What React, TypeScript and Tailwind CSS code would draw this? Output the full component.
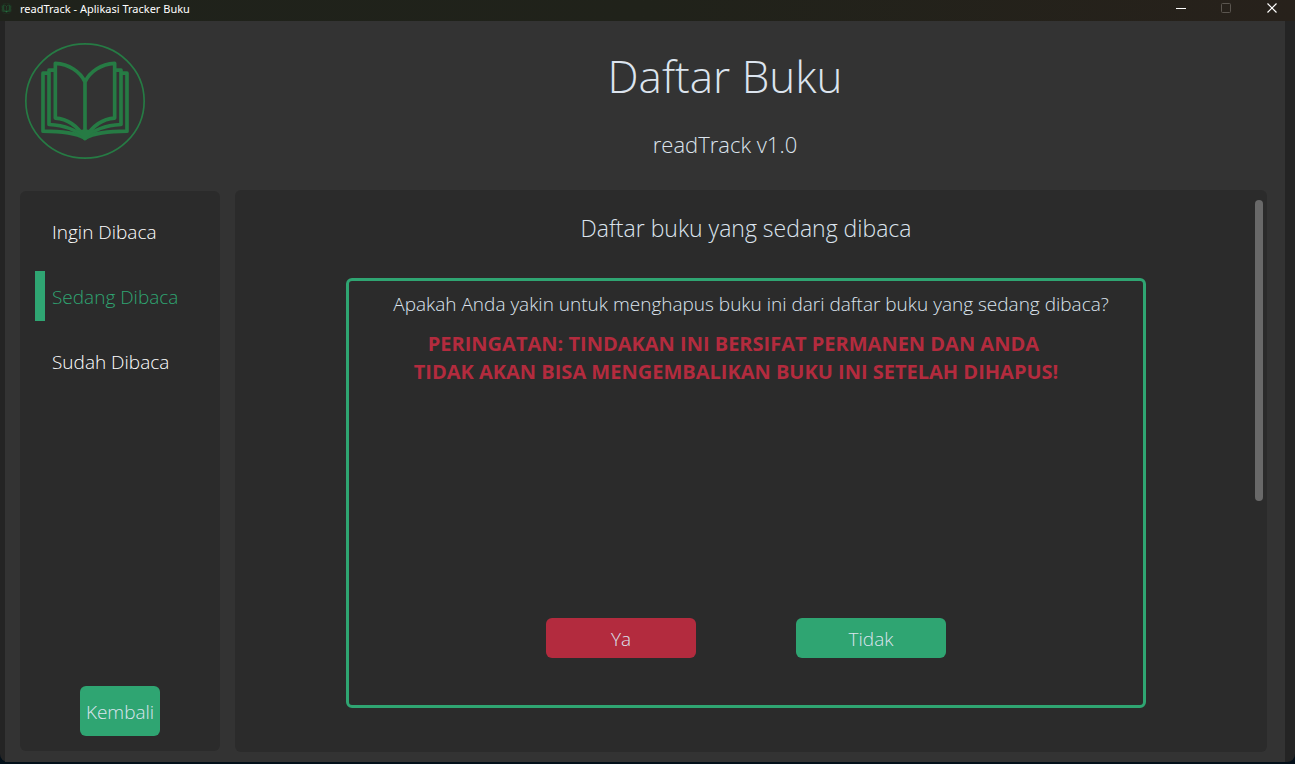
import { useState } from "react";

const shelves = ["Ingin Dibaca", "Sedang Dibaca", "Sudah Dibaca"];

function BookLogo({ className, label }: { className: string; label?: string }) {
  return (
    <svg viewBox="0 0 360 346" preserveAspectRatio="none" className={className} fill="none" stroke="#267b44" role="img" aria-label={label}>
      <ellipse cx="180" cy="173" rx="177.500" ry="170.500" strokeWidth="5" />
      <g strokeWidth="11" strokeLinejoin="round">
        <path d="M180 116C165 85 132 63 91 61V224C128 226 158 248 180 284V116C195 85 228 63 269 61V224C232 226 202 248 180 284" />
        <path d="M91 81H72V243C112 245 150 254 180 284C210 254 248 245 288 243V81H269" />
        <path d="M72 90H54V263C102 263 148 266 180 284C212 266 258 263 306 263V90H288" />
      </g>
      <path d="M150 262L180 258L210 262L180 291Z" fill="#267b44" />
    </svg>
  );
}

function TitleBar() {
  return (
    <header className="flex h-[21px] shrink-0 items-center justify-between bg-linear-to-r from-[#1f221b] via-[#20221a] to-[#27211b]">
      <div className="flex items-center gap-2 pb-1">
        <BookLogo className="ml-px h-[11px] w-[11px]" />
        <span className="font-['Noto_Sans',sans-serif] text-[11px] leading-4 font-normal text-white">readTrack - Aplikasi Tracker Buku</span>
      </div>
      <div className="flex pb-1">
        <button aria-label="Minimize" className="flex h-4 w-[45px] items-center justify-center">
          <svg className="h-[11px] w-[11px]" viewBox="0 0 11 11" stroke="#fff" shapeRendering="crispEdges"><path d="M0 5.500H10" /></svg>
        </button>
        <button aria-label="Maximize" disabled className="flex h-4 w-[45px] items-center justify-center">
          <svg className="h-[11px] w-[11px]" viewBox="0 0 11 11" stroke="#5a554f" fill="none"><rect x=".5" y=".5" width="9" height="9" rx="1" /></svg>
        </button>
        <button aria-label="Close" className="flex h-4 w-[46px] items-center justify-center">
          <svg className="h-[11px] w-[11px]" viewBox="0 0 11 11" stroke="#fff" strokeWidth="1.200"><path d="M.5 .5L9.500 9.500M9.500 .5L.5 9.500" /></svg>
        </button>
      </div>
    </header>
  );
}

export default function App() {
  const [active, setActive] = useState("Sedang Dibaca");

  return (
    <div className="flex h-screen flex-col bg-[#03101a] pb-0.5 font-['Open_Sans','Noto_Sans',sans-serif] font-light">
      <TitleBar />
      <div className="flex min-h-0 grow rounded-b-lg bg-[#242424] pr-2.5 pl-[5px]">
        <div className="flex min-w-0 grow flex-col bg-[#333333]">
          <div className="flex h-[169px] shrink-0">
            <div className="w-40 shrink-0 pt-[22px] pl-5">
              <BookLogo className="h-[116px] w-[120px]" label="readTrack" />
            </div>
            <div className="flex grow flex-col items-center pt-5 text-[#dce4ee]">
              <h1 className="text-[44px] leading-[70px]">Daftar Buku</h1>
              <p className="pt-[17px] text-[22px] leading-8">readTrack v1.0</p>
            </div>
          </div>

          <div className="flex min-h-0 grow gap-[15px] pr-[18px] pb-2.5 pl-[15px]">
            <nav className="my-px flex w-[200px] shrink-0 flex-col rounded-md bg-[#2b2b2b] pt-[15px] pb-[15px] pl-[15px]">
              <div className="flex flex-col gap-[15px]">
                {shelves.map((shelf) => (
                  <button
                    key={shelf}
                    onClick={() => setActive(shelf)}
                    className={
                      shelf === active
                        ? "flex h-[50px] items-center border-l-10 border-[#2fa572] pt-0.5 pl-[7px] text-[19px] text-[#2fa572]"
                        : "flex h-[50px] items-center border-l-10 border-transparent pt-0.5 pl-[7px] text-[19px] text-white"
                    }
                  >
                    {shelf}
                  </button>
                ))}
              </div>
              <button className="mt-auto mr-[15px] h-[50px] w-20 self-center rounded-md bg-[#2fa572] pt-0.5 text-[19px] text-[#dce4ee]">Kembali</button>
            </nav>

            <main className="flex min-w-0 grow rounded-md bg-[#2b2b2b] pr-1">
              <div className="flex min-w-0 grow flex-col items-center pl-0.5">
                <h2 className="pt-[22px] text-[23px] leading-8 text-[#dce4ee]">Daftar buku yang sedang dibaca</h2>
                <section
                  role="alertdialog"
                  aria-labelledby="question"
                  aria-describedby="warning"
                  className="mt-[34px] flex h-[430px] w-full max-w-[800px] flex-col items-center rounded-md border-3 border-[#2fa572] pb-[47px]"
                >
                  <p id="question" className="pt-[7px] pl-2.5 text-[19px] leading-8 text-[#dce4ee]">
                    Apakah Anda yakin untuk menghapus buku ini dari daftar buku yang sedang dibaca?
                  </p>
                  <p id="warning" className="pt-2.5 pr-5 text-center text-[20px] leading-7 font-bold text-[#b32b3e]">
                    PERINGATAN: TINDAKAN INI BERSIFAT PERMANEN DAN ANDA{"\u00a0"}
                    <br />
                    TIDAK AKAN BISA MENGEMBALIKAN BUKU INI SETELAH DIHAPUS!
                  </p>
                  <div className="mt-auto flex gap-[100px] text-[19px] text-[#dce4ee]">
                    <button className="h-10 w-[150px] rounded-md bg-[#b32b3e] pt-0.5">Ya</button>
                    <button className="h-10 w-[150px] rounded-md bg-[#2fa572] pt-0.5">Tidak</button>
                  </div>
                </section>
              </div>
              <div className="w-2 shrink-0 pt-2.5">
                <div className="h-[301px] rounded-sm bg-[#696969]" />
              </div>
            </main>
          </div>
        </div>
      </div>
    </div>
  );
}
